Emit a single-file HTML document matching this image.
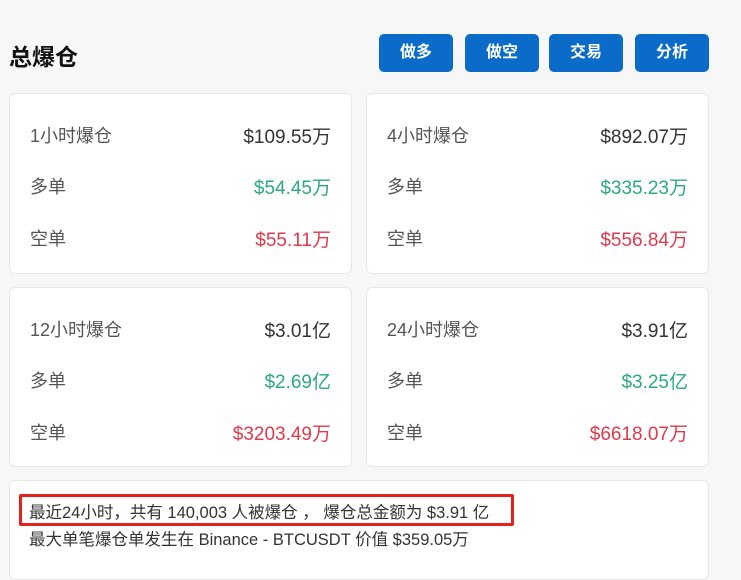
<!DOCTYPE html>
<html><head><meta charset="utf-8"><style>
body{margin:0;width:741px;height:576px;background:#f7f7f8;font-family:"Liberation Sans","Noto Sans CJK SC",sans-serif;position:relative;overflow:hidden;color:#333}
.t{position:absolute;left:9px;top:38px;font-size:23px;font-weight:bold;color:#111}
.b{position:absolute;top:34px;height:38px;width:74px;background:#0b6bc8;color:#fff;border-radius:5px;font-size:16px;font-weight:bold;text-align:center;line-height:38px}
.c{position:absolute;background:#fff;border:1px solid #e6e6e8;border-radius:6px;box-sizing:border-box}
.r{position:absolute;left:20px;right:20px;height:26px;font-size:18px;display:flex;justify-content:space-between;align-items:center;color:#555}
.r span:last-child{color:#333;font-size:19px}
.g span:last-child{color:#2aa883}
.d span:last-child{color:#e0394a}
.l{position:absolute;left:19px;font-size:16.5px;color:#333;white-space:nowrap}
</style></head><body>
<div class="t">总爆仓</div>
<div class="b" style="left:379px">做多</div>
<div class="b" style="left:465px">做空</div>
<div class="b" style="left:549px">交易</div>
<div class="b" style="left:635px">分析</div>

<div class="c" style="left:9px;top:93px;width:343px;height:181px">
<div class="r" style="top:28px"><span>1小时爆仓</span><span>$109.55万</span></div>
<div class="r g" style="top:79px"><span>多单</span><span>$54.45万</span></div>
<div class="r d" style="top:131px"><span>空单</span><span>$55.11万</span></div>
</div>
<div class="c" style="left:366px;top:93px;width:343px;height:181px">
<div class="r" style="top:28px"><span>4小时爆仓</span><span>$892.07万</span></div>
<div class="r g" style="top:79px"><span>多单</span><span>$335.23万</span></div>
<div class="r d" style="top:131px"><span>空单</span><span>$556.84万</span></div>
</div>
<div class="c" style="left:9px;top:287px;width:343px;height:180px">
<div class="r" style="top:28px"><span>12小时爆仓</span><span>$3.01亿</span></div>
<div class="r g" style="top:79px"><span>多单</span><span>$2.69亿</span></div>
<div class="r d" style="top:131px"><span>空单</span><span>$3203.49万</span></div>
</div>
<div class="c" style="left:366px;top:287px;width:343px;height:180px">
<div class="r" style="top:28px"><span>24小时爆仓</span><span>$3.91亿</span></div>
<div class="r g" style="top:79px"><span>多单</span><span>$3.25亿</span></div>
<div class="r d" style="top:131px"><span>空单</span><span>$6618.07万</span></div>
</div>
<div class="c" style="left:9px;top:480px;width:700px;height:100px">
<div class="l" style="top:18px">最近24小时，共有 140,003 人被爆仓 ， 爆仓总金额为 $3.91 亿</div>
<div class="l" style="top:45px">最大单笔爆仓单发生在 Binance - BTCUSDT 价值 $359.05万</div>
</div>
<div style="position:absolute;left:19px;top:494px;width:489px;height:26px;border:3px solid #e8201c;border-radius:2px"></div>
</body></html>
